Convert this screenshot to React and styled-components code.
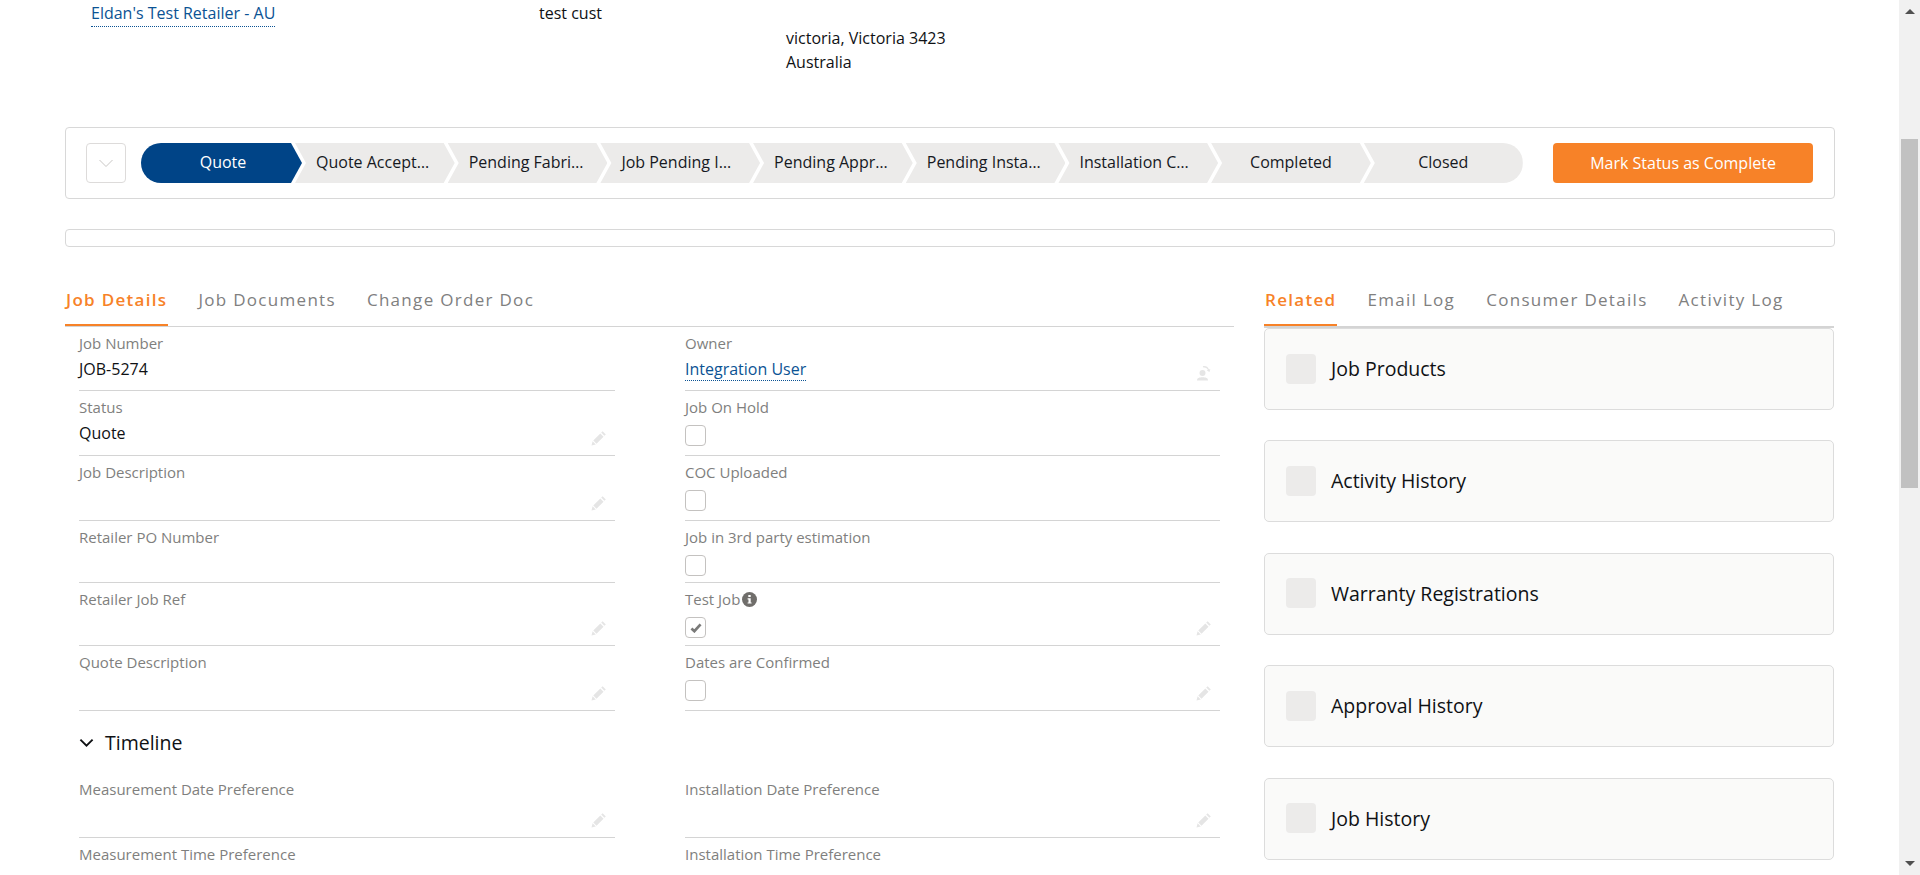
import React from "react";
import styled, { createGlobalStyle } from "styled-components";

const Global = createGlobalStyle`
  html, body { margin: 0; height: 100%; overflow: hidden; background: #fff; }
  body { font-family: "Open Sans", "Noto Sans", sans-serif; font-size: 16px; color: #0f1114; }
  * { box-sizing: border-box; }
`;

const Page = styled.div`display: flex; height: 875px; overflow: hidden;`;
const Main = styled.main`flex: 1; min-width: 0; height: 875px; overflow: hidden;`;
const Scrollbar = styled.div`
  width: 21px; height: 875px; background: #f1f1f1;
  display: flex; flex-direction: column; align-items: center; padding: 9px 0;
`;
const ArrowUp = styled.div`
  width: 0; height: 0; border-left: 5px solid transparent; border-right: 5px solid transparent;
  border-bottom: 5px solid #505050;
`;
const ArrowDown = styled(ArrowUp)`
  margin-top: auto; border-bottom: 0; border-top: 5px solid #505050;
`;
const Thumb = styled.div`
  width: 17px; height: 349px; margin-top: 125px; background: #c1c1c1;
`;

const TopInfo = styled.div`
  height: 127px; padding-left: 91px;
  display: grid; grid-template-columns: 448px 247px auto; align-items: start;
`;
const TopLink = styled.a`
  justify-self: start; line-height: 24px; padding-bottom: 1px; margin-top: 1px;
  color: #0b5394; border-bottom: 1px dotted #0b5394; text-decoration: none;
`;
const TopText = styled.div`line-height: 24px; margin-top: 1px;`;
const Address = styled.div`line-height: 24px; margin-top: 26px;`;

const Card = styled.div`
  margin-left: 65px; width: 1770px; border: 1px solid #d8d8d8; border-radius: 4px; background: #fff;
`;
const PathBar = styled(Card)`display: flex; align-items: center; padding: 15px 21px 15px 20px;`;
const EmptyBar = styled(Card)`height: 18px; margin-top: 30px;`;
const Toggle = styled.div`
  width: 40px; height: 40px; border: 1px solid #dddbda; border-radius: 4px; flex: none; margin-right: 15px;
  display: flex; align-items: center; justify-content: center;
`;
const Track = styled.div`
  flex: 1; height: 40px; display: flex; border-radius: 20px; overflow: hidden; margin-right: 30px;
`;
const Step = styled.div`
  flex: none; width: ${p => p.$first ? 161 : p.$last ? 159 : 159.7}px; height: 40px;
  margin-left: ${p => p.$first ? 0 : -7}px;
  background: ${p => p.$active ? "#004487" : "#ecebea"};
  color: ${p => p.$active ? "#fff" : "#16191f"};
  clip-path: ${p => p.$first
    ? "polygon(0 0, 150px 0, 161px 50%, 150px 100%, 0 100%)"
    : p.$last
      ? "polygon(0 0, 100% 0, 100% 100%, 0 100%, 11px 50%)"
      : "polygon(0 0, calc(100% - 11px) 0, 100% 50%, calc(100% - 11px) 100%, 0 100%, 11px 50%)"};
  padding: ${p => p.$first ? "0 18px 0 21px" : "0 21px"};
  line-height: 39px; text-align: center; white-space: nowrap; overflow: hidden; text-overflow: ellipsis;
`;
const ActionButton = styled.button`
  flex: none; width: 260px; height: 40px; border: 0; border-radius: 4px; padding: 0 0 1px;
  background: #f78228; color: #fff; font: inherit;
`;

const Columns = styled.div`
  margin-left: 65px; width: 1770px; display: grid; grid-template-columns: 1169px 570px; gap: 30px;
`;
const Tabs = styled.div`
  height: ${p => p.$thick ? 81 : 80}px; display: flex; align-items: flex-start; gap: 29px; padding-top: 27px;
  border-bottom: ${p => p.$thick ? 2 : 1}px solid #d4d4d4;
`;
const Tab = styled.div`
  height: 52px; padding: 13px 1px 0; line-height: 26px; font-size: 17px; letter-spacing: 1.3px; white-space: nowrap;
  color: ${p => p.$active ? "#f78228" : "#80807f"};
  font-weight: ${p => p.$active ? 600 : 400};
  box-shadow: ${p => p.$active ? "inset 0 -2px 0 #f78228" : "none"};
`;
const FieldGrid = styled.div`
  display: grid; grid-template-columns: 536px 535px; column-gap: 70px; padding-left: 14px;
`;
const Row = styled.div`
  height: ${p => p.$h}px; padding-top: 6px; border-bottom: 1px solid #d4d4d4;
  display: grid; grid-template-columns: 1fr auto;
`;
const Label = styled.div`
  font-size: 15px; line-height: 20px; color: #7f7f7e; white-space: nowrap; display: flex; align-items: center; gap: 2px;
  margin-bottom: ${p => p.$gap}px;
`;
const Value = styled.div`line-height: 24px; margin-top: 4px; color: #0f1114;`;
const OwnerLink = styled.a`
  color: #0b5394; text-decoration: none; border-bottom: 1px dotted #0b5394; display: inline-block; line-height: 22px;
`;
const Check = styled.div`
  width: 21px; height: 21px; margin-top: 8px; border: 1px solid #c4c2c0; border-radius: 4px;
  display: flex; align-items: center; justify-content: center;
`;
const Aside = styled.div`align-self: end; margin: 0 8px 10px 0; height: 16px;`;
const Section = styled.div`
  grid-column: 1 / -1; height: 62px; display: flex; align-items: center; gap: 11px;
  font-size: 19.5px; color: #0f1114;
`;
const Related = styled.div`display: flex; flex-direction: column; gap: 30.4px;`;
const RelatedCard = styled.div`
  height: 82px; border: 1px solid #dcdcdc; border-radius: 5px; background: #fafaf9;
  display: flex; align-items: center; gap: 15px; padding: 0 0 1px 21px; font-size: 19.5px; color: #0f1114;
`;
const IconBox = styled.div`width: 30px; height: 30px; border-radius: 4px; background: #ecebea;`;

const Pencil = () => (
  <svg width="16" height="16" viewBox="0 0 16 16" fill="#e5e5e5">
    <path d="M11.6 1.2l3.2 3.2-1.4 1.4-3.2-3.2zM9.3 3.5l3.2 3.2-7 7-3.2-3.2zM1.6 11.2l3.2 3.2L.5 15.5z" />
  </svg>
);
const Reassign = () => (
  <svg width="16" height="16" viewBox="0 0 16 16" fill="#e5e5e5">
    <circle cx="6.5" cy="8" r="3" />
    <path d="M1 15.5c0-2.6 2.5-3.2 5.5-3.2s5.5.6 5.5 3.2z" />
    <path d="M6.8 1.2c2.8-.6 5.2.6 6.2 3.2l1.3-.5-.8 3-2.8-1.5 1.2-.5c-.7-1.9-2.4-2.8-4.6-2.4z" />
  </svg>
);
const Info = () => (
  <svg width="15" height="15" viewBox="0 0 15 15">
    <circle cx="7.5" cy="7.5" r="7.5" fill="#706e6b" />
    <rect x="6.3" y="3" width="2.4" height="2" fill="#fff" />
    <path d="M5.6 6.2h3.1v4.2h.9v1.2H5.6v-1.2h.9v-3h-.9z" fill="#fff" />
  </svg>
);
const Chevron = ({ color, size, width }) => (
  <svg width={size} height={size} viewBox="0 0 16 16" fill="none" stroke={color} strokeWidth={width}>
    <path d="M1.5 5l6.5 6.5L14.5 5" />
  </svg>
);
const Tick = () => (
  <svg width="12" height="10" viewBox="0 0 13 11" fill="none" stroke="#7a7a79" strokeWidth="3">
    <path d="M1.5 6l3.2 3L11.5 1.5" />
  </svg>
);

const steps = ["Quote", "Quote Accepted", "Pending Fabrication", "Job Pending Installation", "Pending Approval", "Pending Installation", "Installation Complete", "Completed", "Closed"];
const relatedCards = ["Job Products", "Activity History", "Warranty Registrations", "Approval History", "Job History"];

const Field = ({ h, label, value, check, checked, icon, info, link, gap = 0 }) => (
  <Row $h={h}>
    <div>
      <Label $gap={gap}>{label}{info && <Info />}</Label>
      {value && <Value>{value}</Value>}
      {link && <Value><OwnerLink>{link}</OwnerLink></Value>}
      {check && <Check>{checked && <Tick />}</Check>}
    </div>
    {icon && <Aside>{icon === "owner" ? <Reassign /> : <Pencil />}</Aside>}
  </Row>
);

export default function App() {
  return (
    <Page>
      <Global />
      <Main>
        <TopInfo>
          <TopLink>Eldan's Test Retailer - AU</TopLink>
          <TopText>test cust</TopText>
          <Address>victoria, Victoria 3423<br />Australia</Address>
        </TopInfo>
        <PathBar>
          <Toggle><Chevron color="#c9c7c5" size={16} width={1} /></Toggle>
          <Track>
            {steps.map((s, i) => (
              <Step key={s} $first={i === 0} $last={i === steps.length - 1} $active={i === 0}>{s}</Step>
            ))}
          </Track>
          <ActionButton>Mark Status as Complete</ActionButton>
        </PathBar>
        <EmptyBar />
        <Columns>
          <div>
            <Tabs>
              <Tab $active>Job Details</Tab>
              <Tab>Job Documents</Tab>
              <Tab>Change Order Doc</Tab>
            </Tabs>
            <FieldGrid>
              <Field h={64} gap={1} label="Job Number" value="JOB-5274" />
              <Field h={64} gap={1} label="Owner" link="Integration User" icon="owner" />
              <Field h={65} label="Status" value="Quote" icon="edit" />
              <Field h={65} label="Job On Hold" check />
              <Field h={65} label="Job Description" icon="edit" />
              <Field h={65} label="COC Uploaded" check />
              <Field h={62} label="Retailer PO Number" />
              <Field h={62} label="Job in 3rd party estimation" check />
              <Field h={63} label="Retailer Job Ref" icon="edit" />
              <Field h={63} label="Test Job" info check checked icon="edit" />
              <Field h={65} label="Quote Description" icon="edit" />
              <Field h={65} label="Dates are Confirmed" check icon="edit" />
              <Section><Chevron color="#0f1114" size={15} width={2} />Timeline</Section>
              <Field h={65} label="Measurement Date Preference" icon="edit" />
              <Field h={65} label="Installation Date Preference" icon="edit" />
              <Field h={65} label="Measurement Time Preference" />
              <Field h={65} label="Installation Time Preference" />
            </FieldGrid>
          </div>
          <div>
            <Tabs $thick>
              <Tab $active>Related</Tab>
              <Tab>Email Log</Tab>
              <Tab>Consumer Details</Tab>
              <Tab>Activity Log</Tab>
            </Tabs>
            <Related>
              {relatedCards.map(c => <RelatedCard key={c}><IconBox />{c}</RelatedCard>)}
            </Related>
          </div>
        </Columns>
      </Main>
      <Scrollbar>
        <ArrowUp />
        <Thumb />
        <ArrowDown />
      </Scrollbar>
    </Page>
  );
}
